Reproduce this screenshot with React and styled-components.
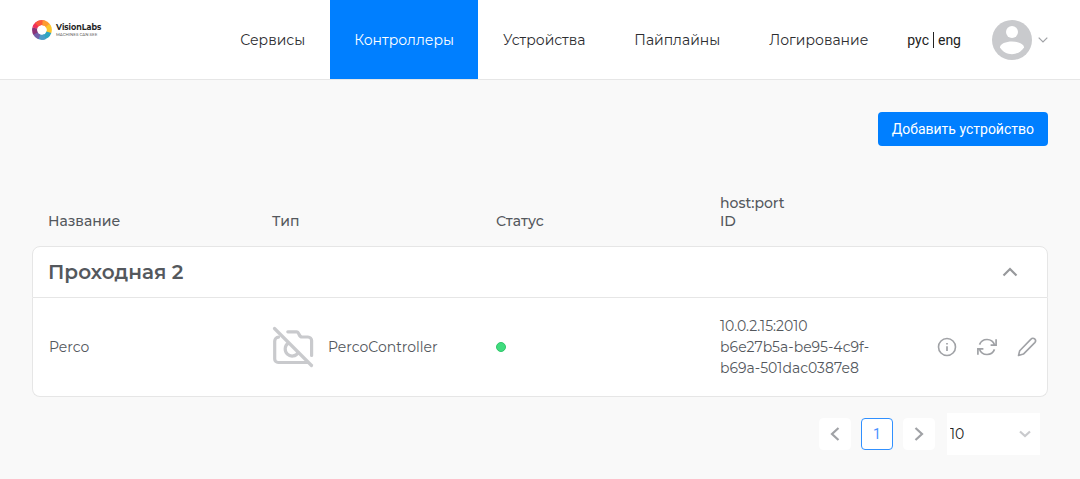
import React, { useState } from 'react'
import styled, { createGlobalStyle } from 'styled-components'

const menu = ['Сервисы', 'Контроллеры', 'Устройства', 'Пайплайны', 'Логирование']

const groups = [
  {
    name: 'Проходная 2',
    devices: [
      {
        id: 'b6e27b5a-be95-4c9f-b69a-501dac0387e8',
        name: 'Perco',
        type: 'PercoController',
        host: '10.0.2.15:2010',
        online: true,
      },
    ],
  },
]

const Logo = () => (
  <LogoLink href="#" aria-label="VisionLabs">
    <svg width="20" height="20" viewBox="0 0 20 20" fill="none" strokeWidth="5">
      <path d="M2.8 8.1A7.3 7.3 0 0 1 9 2.8" stroke="#f0305a" />
      <path d="M4.8 4.8A7.3 7.3 0 0 1 12.5 3.1" stroke="#fb5a3c" />
      <path d="M10.5 2.7A7.3 7.3 0 0 1 16.5 6.7" stroke="#fd9a30" />
      <path d="M15.6 5.3A7.3 7.3 0 0 1 16.6 13" stroke="#fcc62c" />
      <path d="M16.9 12.3A7.3 7.3 0 0 1 11 17.2" stroke="#2fa5c0" />
      <path d="M13 16.7A7.3 7.3 0 0 1 6.5 16.4" stroke="#4b9cc9" />
      <path d="M7.5 16.9A7.3 7.3 0 0 1 3.1 12.5" stroke="#7160a8" />
      <path d="M3.6 13.5A7.3 7.3 0 0 1 2.8 8" stroke="#8a3277" />
    </svg>
    <LogoText>
      <LogoName>VisionLabs</LogoName>
      <LogoSlogan>MACHINES CAN SEE</LogoSlogan>
    </LogoText>
  </LogoLink>
)

const Avatar = () => (
  <svg width="40" height="40" viewBox="0 0 40 40">
    <circle cx="20" cy="20" r="20" fill="#c9cacd" />
    <circle cx="20" cy="12" r="6" fill="#fff" />
    <path
      d="M8 27.5C8 23.8 14 21.6 20 21.6S32 23.8 32 27.5C29.4 31.6 25 34.2 20 34.2S10.6 31.6 8 27.5Z"
      fill="#fff"
    />
  </svg>
)

const Chevron = ({ d, width, height, color, weight = 2 }) => (
  <svg width={width} height={height} viewBox={`0 0 ${width} ${height}`} fill="none">
    <path d={d} stroke={color} strokeWidth={weight} />
  </svg>
)

const NoPhotoIcon = () => (
  <svg
    width="42"
    height="42"
    viewBox="0 0 42 42"
    fill="none"
    stroke="#c9cacd"
    strokeWidth="3.2"
    strokeLinecap="round"
  >
    <path d="M2.5 2.5 39.5 39.5" />
    <path d="M6.5 11.2A4 4 0 0 0 2.7 15V33A3.5 3.5 0 0 0 6.2 36.5H35.5" />
    <path d="M15.8 5.8H24.5C27.5 5.8 26.5 11 30 11H36A3.6 3.6 0 0 1 39.6 14.6V29.5" />
    <path d="M16.3 17.2A7 7 0 1 0 26.2 26.6" />
  </svg>
)

const InfoIcon = () => (
  <svg width="20" height="20" viewBox="0 0 20 20" fill="none" stroke="#a0a2a6">
    <circle cx="10" cy="10" r="8.5" strokeWidth="1.6" />
    <path d="M10 9.2V14M10 6V7.6" strokeWidth="1.7" />
  </svg>
)

const RefreshIcon = () => (
  <svg width="20" height="20" viewBox="0 0 20 20" fill="none" stroke="#a0a2a6" strokeWidth="1.7">
    <path d="M2.5 7.6A8 8 0 0 1 17.5 7.8M19.1 2.2V8.1H13.6" />
    <path d="M17.5 12.4A8 8 0 0 1 2.5 12.2M0.9 17.8V11.9H6.4" />
  </svg>
)

const PencilIcon = () => (
  <svg
    width="20"
    height="20"
    viewBox="0 0 20 20"
    fill="none"
    stroke="#a0a2a6"
    strokeWidth="1.6"
    strokeLinejoin="round"
  >
    <path d="M1.5 18.5 2.7 13.8 14 2.1A2.3 2.3 0 0 1 17.8 5.6L6.4 17.1Z" />
  </svg>
)

const App = () => {
  const [active, setActive] = useState('Контроллеры')
  const [closed, setClosed] = useState([])
  const [pageSize, setPageSize] = useState('10')

  const toggleGroup = name => {
    setClosed(prev =>
      prev.includes(name) ? prev.filter(item => item !== name) : [...prev, name],
    )
  }

  return (
    <>
      <GlobalStyle />
      <Header>
        <Logo />
        <Nav>
          {menu.map(item => (
            <NavLink
              key={item}
              href="#"
              $active={item === active}
              onClick={() => setActive(item)}
            >
              {item}
            </NavLink>
          ))}
        </Nav>
        <Languages>
          <LangButton>рус</LangButton>
          <LangButton>eng</LangButton>
        </Languages>
        <UserButton aria-label="Профиль">
          <Avatar />
          <Chevron width={10} height={6} d="M0.7 0.7 5 5 9.3 0.7" color="#a0a2a6" weight={1.2} />
        </UserButton>
      </Header>
      <Main>
        <Toolbar>
          <AddButton>Добавить устройство</AddButton>
        </Toolbar>
        <Table>
          <colgroup>
            <col />
            <col />
            <col />
            <col />
            <ActionsCol />
          </colgroup>
          <thead>
            <tr>
              <HeadCell>Название</HeadCell>
              <HeadCell>Тип</HeadCell>
              <HeadCell>Статус</HeadCell>
              <HeadCell>
                host:port
                <br />
                ID
              </HeadCell>
              <HeadCell as="td" />
            </tr>
          </thead>
          {groups.map(group => (
            <tbody key={group.name}>
              <tr>
                <GroupCell colSpan={5}>
                  <GroupTitle>
                    {group.name}
                    <IconButton aria-label="Свернуть" onClick={() => toggleGroup(group.name)}>
                      <Chevron
                        width={16}
                        height={10}
                        d="M1.5 8.5 8 2 14.5 8.5"
                        color="#97999c"
                        weight={2.2}
                      />
                    </IconButton>
                  </GroupTitle>
                </GroupCell>
              </tr>
              {!closed.includes(group.name) &&
                group.devices.map(device => (
                  <DeviceRow key={device.id}>
                    <Cell>{device.name}</Cell>
                    <Cell>
                      <DeviceType>
                        <NoPhotoIcon />
                        {device.type}
                      </DeviceType>
                    </Cell>
                    <Cell>
                      <Status $online={device.online} />
                    </Cell>
                    <Cell>
                      {device.host}
                      <br />
                      {device.id}
                    </Cell>
                    <ActionsCell>
                      <Actions>
                        <IconButton aria-label="Информация">
                          <InfoIcon />
                        </IconButton>
                        <IconButton aria-label="Обновить">
                          <RefreshIcon />
                        </IconButton>
                        <IconButton aria-label="Редактировать">
                          <PencilIcon />
                        </IconButton>
                      </Actions>
                    </ActionsCell>
                  </DeviceRow>
                ))}
            </tbody>
          ))}
        </Table>
        <Pagination>
          <PageButton aria-label="Назад">
            <Chevron width={10} height={14} d="M8.5 1 2 7 8.5 13" color="#a0a2a6" weight={2.2} />
          </PageButton>
          <PageButton $current>1</PageButton>
          <PageButton aria-label="Вперёд">
            <Chevron width={10} height={14} d="M1.5 1 8 7 1.5 13" color="#a0a2a6" weight={2.2} />
          </PageButton>
          <SizeBox>
            <SizeSelect
              aria-label="Строк на странице"
              value={pageSize}
              onChange={event => setPageSize(event.target.value)}
            >
              <option>10</option>
              <option>25</option>
              <option>50</option>
            </SizeSelect>
            <Chevron width={12} height={8} d="M1 1.5 6 6 11 1.5" color="#c9cacd" weight={2.2} />
          </SizeBox>
        </Pagination>
      </Main>
    </>
  )
}

const GlobalStyle = createGlobalStyle`
  * {
    box-sizing: border-box;
  }
  body {
    margin: 0;
    background-color: #f9f9f9;
    color: #54585d;
    font-family: Montserrat, Inter, sans-serif;
    font-size: 14px;
    font-weight: 400;
  }
  button,
  select {
    margin: 0;
    padding: 0;
    border: none;
    background: none;
    color: inherit;
    font: inherit;
    cursor: pointer;
  }
  svg {
    display: block;
    flex-shrink: 0;
  }
`

const Header = styled.header`
  height: 80px;
  display: flex;
  padding: 0 32px;
  background-color: white;
  border-bottom: 1px solid #e6e6e6;
`

const LogoLink = styled.a`
  display: flex;
  align-self: flex-start;
  gap: 4px;
  margin-top: 20px;
  color: #222;
  text-decoration: none;
`

const LogoText = styled.span`
  display: flex;
  flex-direction: column;
  padding-top: 3px;
`

const LogoName = styled.span`
  font-size: 8px;
  font-weight: 700;
  line-height: 9px;
`

const LogoSlogan = styled.span`
  font-size: 4px;
  font-weight: 500;
  line-height: 5px;
  color: #666;
`

const Nav = styled.nav`
  display: flex;
  gap: 1px;
  margin-left: auto;
`

const NavLink = styled.a`
  display: flex;
  align-items: center;
  padding: 0 24px;
  background-color: ${({ $active }) => ($active ? '#007fff' : 'transparent')};
  color: ${({ $active }) => ($active ? 'white' : '#2c2d30')};
  text-decoration: none;
`

const Languages = styled.div`
  display: flex;
  align-items: center;
  margin: 0 27px 0 11px;
`

const LangButton = styled.button`
  padding: 0 4px;
  color: #222;
  font-family: Roboto, sans-serif;
  font-size: 14px;
  line-height: 16px;

  & + & {
    border-left: 1px solid #222;
  }
`

const UserButton = styled.button`
  display: flex;
  align-items: center;
  gap: 6px;
`

const Main = styled.main`
  padding: 32px;
`

const Toolbar = styled.div`
  display: flex;
  justify-content: flex-end;
  margin-bottom: 48px;
`

const AddButton = styled.button`
  height: 34px;
  padding: 0 14px;
  border-radius: 4px;
  background-color: #007fff;
  color: white;
  font-family: Roboto, sans-serif;
  font-size: 14px;
  font-weight: 400;
`

const Table = styled.table`
  width: 100%;
  table-layout: fixed;
  border-collapse: separate;
  border-spacing: 0;
`

const ActionsCol = styled.col`
  width: 120px;
`

const HeadCell = styled.th`
  padding: 0 16px 16px;
  font-size: 14px;
  font-weight: 500;
  line-height: 18px;
  text-align: left;
  vertical-align: bottom;
`

const GroupCell = styled.td`
  height: 52px;
  padding: 0 17px 0 15px;
  background-color: white;
  border: 1px solid #e6e6e6;
  border-radius: 8px 8px 0 0;
`

const GroupTitle = styled.div`
  display: flex;
  align-items: center;
  justify-content: space-between;
  font-size: 20px;
  font-weight: 600;
`

const IconButton = styled.button`
  width: 40px;
  height: 40px;
  display: flex;
  flex-shrink: 0;
  align-items: center;
  justify-content: center;
`

const Cell = styled.td`
  height: 99px;
  padding: 0 32px 0 16px;
  background-color: white;
  border-bottom: 1px solid #e6e6e6;
  line-height: 21px;
`

const ActionsCell = styled(Cell)`
  padding: 0;
`

const DeviceRow = styled.tr`
  & > td:first-child {
    border-left: 1px solid #e6e6e6;
  }
  &:last-child > td:first-child {
    border-bottom-left-radius: 8px;
  }
  & > td:last-child {
    border-right: 1px solid #e6e6e6;
  }
  &:last-child > td:last-child {
    border-bottom-right-radius: 8px;
  }
`

const DeviceType = styled.div`
  display: flex;
  align-items: center;
  gap: 14px;
`

const Status = styled.div`
  width: 10px;
  height: 10px;
  border: 1px solid ${({ $online }) => ($online ? '#2fc76a' : '#c9cacd')};
  border-radius: 50%;
  background-color: ${({ $online }) => ($online ? '#40dc7e' : '#c9cacd')};
`

const Actions = styled.div`
  display: flex;
  justify-content: flex-end;
`

const Pagination = styled.div`
  display: flex;
  align-items: center;
  justify-content: flex-end;
  gap: 10px;
  padding: 16px 8px 0;
`

const PageButton = styled.button`
  width: 32px;
  height: 32px;
  display: flex;
  align-items: center;
  justify-content: center;
  background-color: white;
  border: 1px solid ${({ $current }) => ($current ? '#3090ff' : 'white')};
  border-radius: 4px;
  color: #4a92ff;
  font-family: Roboto, sans-serif;
  font-size: 14px;
`

const SizeBox = styled.div`
  width: 93px;
  height: 42px;
  display: grid;
  align-items: center;
  margin-left: 2px;
  background-color: white;

  & > * {
    grid-area: 1 / 1;
  }
  & > svg {
    justify-self: end;
    margin-right: 9px;
    pointer-events: none;
  }
`

const SizeSelect = styled.select`
  width: 100%;
  height: 100%;
  padding: 0 3px;
  appearance: none;
  color: #222;
`

export default App
